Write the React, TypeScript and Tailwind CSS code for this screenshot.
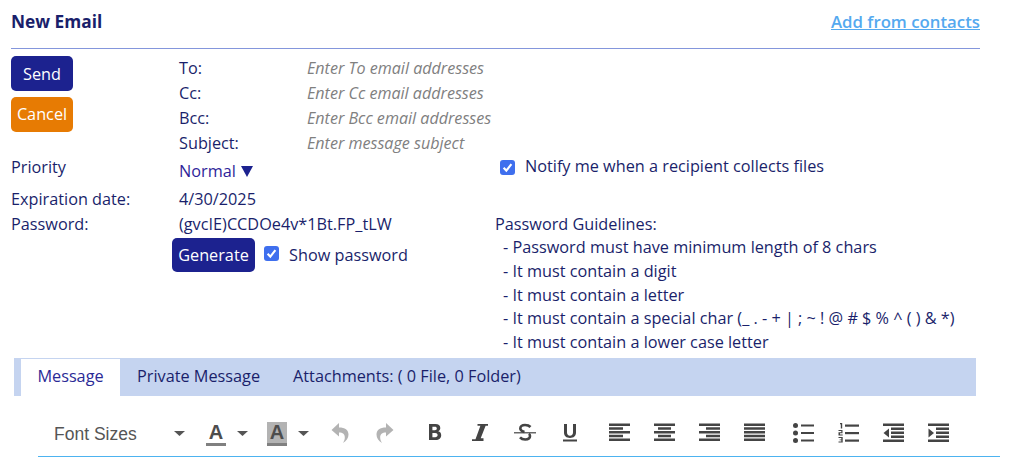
function Chk() {
  return (
    <span className="flex h-[15px] w-[15px] items-center justify-center rounded-[3px] bg-[#3f6fee]">
      <svg width="11" height="11" viewBox="0 0 11 11" fill="none">
        <path d="M1.6 5.800 4.300 8.600 9.400 2.200" stroke="#fff" strokeWidth="2.100" />
      </svg>
    </span>
  );
}

function Caret() {
  return (
    <svg width="11" height="5" viewBox="0 0 11 5" className="block">
      <path d="M0 0h11L5.500 5z" fill="#555" />
    </svg>
  );
}

function Ico({ children, w = 22, dim = false }: { children: React.ReactNode; w?: number; dim?: boolean }) {
  return (
    <span className="flex w-[45px] shrink-0 justify-center">
      <svg width={w} height="20" viewBox={`0 0 ${w} 20`} fill={dim ? "#b3b3b3" : "#444"} className="block">
        {children}
      </svg>
    </span>
  );
}

function Bars({ rows }: { rows: [number, number][] }) {
  return (
    <>
      {rows.map(([x, w], i) => (
        <rect key={i} x={x} y={0.5 + i * 3.75} width={w} height="2.500" />
      ))}
    </>
  );
}

function ColorA({ hl }: { hl?: boolean }) {
  return (
    <span className="relative flex h-[24px] w-[20px] justify-center">
      <span className={`absolute top-0 h-[21px] w-[20px] ${hl ? "bg-[#b3b3b3]" : ""}`} />
      <span className="relative font-['Liberation_Sans',sans-serif] text-[20px] font-bold leading-[21px] text-[#4d4d4d]">A</span>
      <span className="absolute bottom-0 h-[3px] w-[20px] bg-[#808080]" />
    </span>
  );
}

export default function App() {
  return (
    <div className="h-[468px] w-[1011px] overflow-hidden bg-white pl-[11px] font-['Open_Sans',sans-serif] text-[16.25px] text-[#1a1f6b]">
      <div className="flex h-[49px] w-[969px] items-start justify-between border-b border-[#8496dc] pt-[10px]">
        <span className="text-[17.3px] font-bold leading-[24px]">New Email</span>
        <a className="text-[16.8px] font-semibold leading-[24px] text-[#54a9ef] underline">Add from contacts</a>
      </div>

      <div className="flex">
        <div className="w-[168px] pt-[7px]">
          <div className="flex h-[35px] w-[62px] items-center justify-center rounded-[5px] bg-[#1c228f] pt-[1px] text-white">Send</div>
          <div className="mt-[6px] flex h-[35px] w-[62px] items-center justify-center rounded-[5px] bg-[#e77b03] text-white">Cancel</div>
        </div>
        <div className="pt-[7px] leading-[25px]">
          {[
            ["To:", "Enter To email addresses"],
            ["Cc:", "Enter Cc email addresses"],
            ["Bcc:", "Enter Bcc email addresses"],
            ["Subject:", "Enter message subject"],
          ].map(([l, p]) => (
            <div key={l} className="flex h-[25px]">
              <span className="w-[128px]">{l}</span>
              <span className="text-[16.1px] italic text-[#80807f]">{p}</span>
            </div>
          ))}
        </div>
      </div>

      <div className="flex h-[24px]">
        <span className="w-[168px] leading-[22px]">Priority</span>
        <span className="flex h-[30px] w-[321px] items-center text-[#2f1f9a]">
          Normal
          <svg width="12" height="11" viewBox="0 0 12 11" className="ml-[5px]">
            <path d="M0 0h12L6 11z" fill="#1c228f" />
          </svg>
        </span>
        <span className="flex h-[22px] items-center">
          <Chk />
          <span className="ml-[10px] mb-[1px]">Notify me when a recipient collects files</span>
        </span>
      </div>

      <div className="mt-[7px] flex">
        <div className="w-[484px]">
          <div className="flex h-[25px] leading-[25px]">
            <span className="w-[168px]">Expiration date:</span>
            <span>4/30/2025</span>
          </div>
          <div className="flex h-[25px] leading-[25px]">
            <span className="w-[168px]">Password:</span>
            <span>(gvcIE)CCDOe4v*1Bt.FP_tLW</span>
          </div>
          <div className="ml-[161px] mt-[1px] flex h-[34px] items-center">
            <span className="flex h-[34px] w-[83px] items-center justify-center rounded-[5px] bg-[#1c228f] text-white">Generate</span>
            <span className="ml-[9px] mb-[4px]"><Chk /></span>
            <span className="ml-[10px]">Show password</span>
          </div>
        </div>
        <div className="pt-[25px] leading-[24px]">
          <div className="h-[23px]">Password Guidelines:</div>
          {[
            "Password must have minimum length of 8 chars",
            "It must contain a digit",
            "It must contain a letter",
            "It must contain a special char (_ . - + | ; ~ ! @ # $ % ^ ( ) & *)",
            "It must contain a lower case letter",
          ].map((t) => (
            <div key={t} className="h-[23.8px] whitespace-pre pl-[8px]">- {t}</div>
          ))}
        </div>
      </div>

      <div className="ml-[3px] mt-[4px] flex h-[38px] w-[962px] items-start bg-[#c5d4f0] pl-[7px]">
        <span className="mt-[1px] flex h-[38px] w-[99px] items-center justify-center bg-white pb-[3px] text-[#2a2a96]">Message</span>
        <span className="ml-[17px] flex h-[36px] items-center">Private Message</span>
        <span className="ml-[33px] flex h-[36px] items-center">Attachments: ( 0 File, 0 Folder)</span>
      </div>

      <div className="ml-[27px] mt-[26px] flex h-[35px] w-[962px] items-start border-b border-[#4db3f0]">
        <span className="ml-[16px] w-[120px] font-['Liberation_Sans',sans-serif] text-[17.5px] leading-[24px] text-[#555]">Font Sizes</span>
        <span className="mt-[9px]"><Caret /></span>
        <span className="ml-[21px]"><ColorA /></span>
        <span className="ml-[11px] mt-[9px]"><Caret /></span>
        <span className="ml-[19px]"><ColorA hl /></span>
        <span className="ml-[11px] mt-[9px]"><Caret /></span>
        <div className="ml-[8px] mt-[1px] flex items-center">
          <Ico w={18} dim><path d="M8 0 .5 7 8 13.500V9.500c3.800 0 6 1.500 5.800 5.500-.1 1.800-.8 3.500-1.800 5 3.500-2 5.500-5 5.500-8.500C17.500 7 14 4.500 8 4.500z" /></Ico>
          <Ico w={18} dim><path d="M10 0l7.500 7L10 13.500V9.500c-3.800 0-6 1.500-5.800 5.500.1 1.800.8 3.500 1.800 5C2.500 18 .5 15 .5 11.500.5 7 4 4.500 10 4.500z" /></Ico>
          <span className="ml-[5px] flex">
            <Ico w={14}><path fillRule="evenodd" d="M1 1h6.500c3 0 4.800 1.500 4.800 4 0 1.600-.8 2.800-2.100 3.300 1.900.4 3 1.900 3 3.900 0 3-2.100 4.800-5.400 4.800H1zm3.400 2.800v3.400h2.500c1.200 0 1.900-.6 1.900-1.700s-.7-1.700-1.900-1.700zm0 6.100v4.300H7.200c1.500 0 2.400-.8 2.400-2.200s-.9-2.100-2.400-2.100z" /></Ico>
            <Ico w={16}><path d="M5.500 1H16v1.800h-2.400L8.700 15.200H11.500V18H0v-1.800h3.500L8.400 2.800H5.500z" /></Ico>
            <Ico w={22}>
              <path d="M16.500 4C15.200 2.600 13.300 2 11 2 8 2 6.300 3.600 6.300 5.600c0 1.900 1.600 2.800 4.200 3.500M6 14.300C7.300 15.800 9 16.500 11.200 16.500c3 0 4.800-1.500 4.800-3.400 0-1.100-.4-1.800-1.100-2.300" fill="none" stroke="#444" strokeWidth="2.600" />
              <rect y="9.200" width="22" height="1.200" />
            </Ico>
            <Ico w={14}><path d="M1 1h3v8.500c0 2 1.100 3.200 3 3.200s3-1.200 3-3.200V1h3v8.600c0 3.600-2.300 5.400-6 5.400s-6-1.800-6-5.400z M0 16.500h14V18.500H0z" /></Ico>
          </span>
          <span className="ml-[5px] flex">
            <Ico w={21}><Bars rows={[[0, 21], [0, 14], [0, 21], [0, 14], [0, 21]]} /></Ico>
            <Ico w={21}><Bars rows={[[0, 21], [4, 13], [0, 21], [4, 13], [0, 21]]} /></Ico>
            <Ico w={21}><Bars rows={[[0, 21], [7, 14], [0, 21], [7, 14], [0, 21]]} /></Ico>
            <Ico w={21}><Bars rows={[[0, 21], [0, 21], [0, 21], [0, 21], [0, 21]]} /></Ico>
          </span>
          <span className="ml-[4px] flex">
            <Ico w={21}>
              <circle cx="2.500" cy="2.500" r="2.500" /><circle cx="2.500" cy="10" r="2.500" /><circle cx="2.500" cy="17.500" r="2.500" />
              <rect x="8" y="1.500" width="13" height="2" /><rect x="8" y="9" width="13" height="2" /><rect x="8" y="16.500" width="13" height="2" />
            </Ico>
            <Ico w={21}>
              <path d="M2 0h2.200v5.500H2.800V1.300H2z M.5 7h4v3.200H2v1.300h2.700v1H.5V9.300h2.800V8H.5z M.5 14h4.200v5.500H.5v-1h2.800v-1.200H1.600v-.9h1.700V15H.5z" />
              <rect x="7" y="1.500" width="14" height="2.200" /><rect x="7" y="9" width="14" height="2.200" /><rect x="7" y="16.500" width="14" height="2.200" />
            </Ico>
            <Ico w={21}>
              <rect width="21" height="2.500" y="0.500" /><rect x="8" y="4.500" width="13" height="2.500" /><rect x="8" y="8.500" width="13" height="2.500" /><rect x="8" y="12.500" width="13" height="2.500" /><rect width="21" height="2.500" y="16.500" />
              <path d="M6 5.500v9L.5 10z" />
            </Ico>
            <Ico w={21}>
              <rect width="21" height="2.500" y="0.500" /><rect x="8" y="4.500" width="13" height="2.500" /><rect x="8" y="8.500" width="13" height="2.500" /><rect x="8" y="12.500" width="13" height="2.500" /><rect width="21" height="2.500" y="16.500" />
              <path d="M.5 5.500v9L6 10z" />
            </Ico>
          </span>
        </div>
      </div>
    </div>
  );
}
